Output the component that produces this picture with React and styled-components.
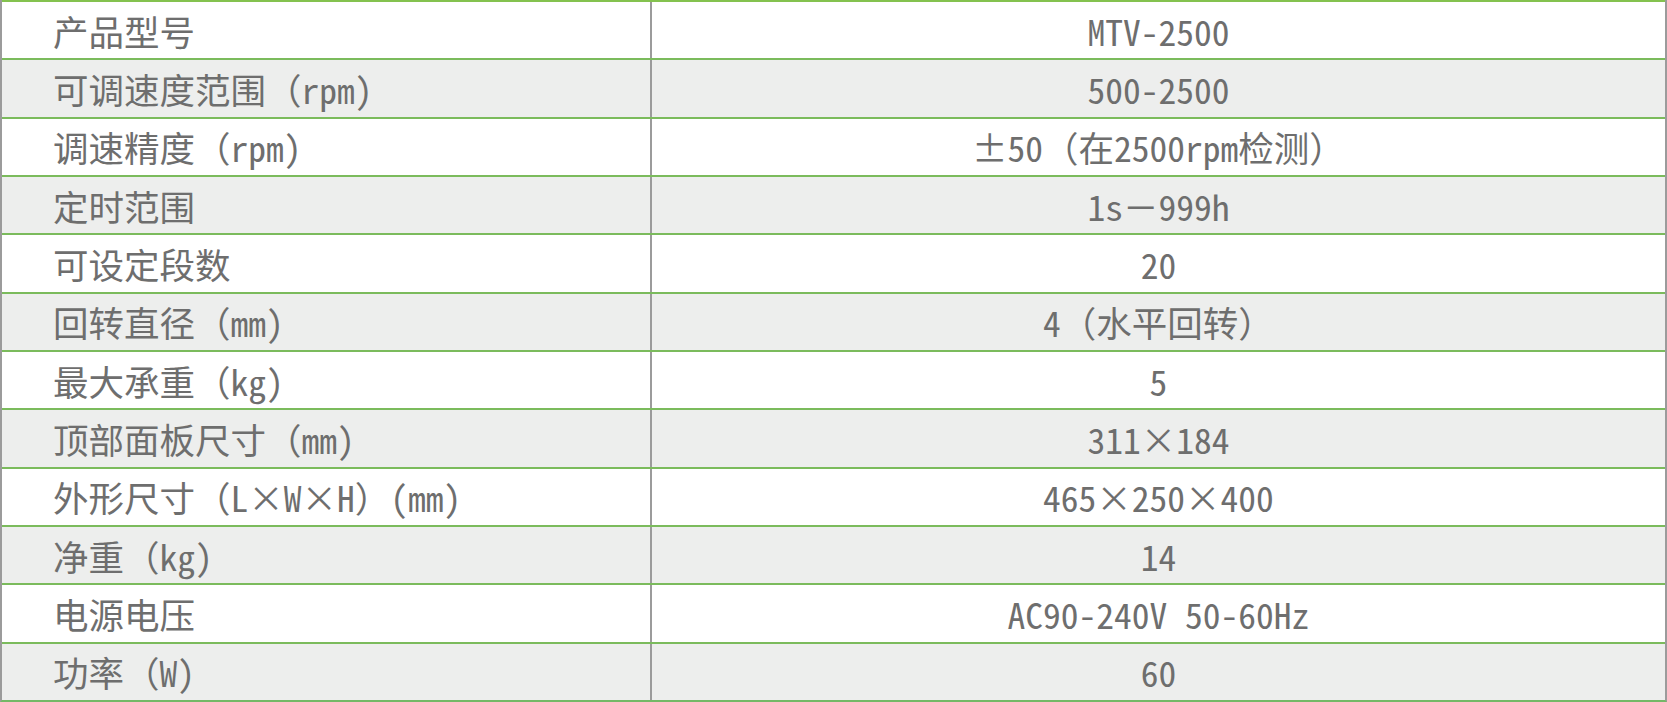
import styled, { createGlobalStyle } from 'styled-components'

const GlobalStyle = createGlobalStyle`
	html, body {
		margin: 0;
		padding: 0;
		background: #ffffff;
	}
`;

const rows = [
	["产品型号", "MTV-2500"],
	["可调速度范围（rpm)", "500-2500"],
	["调速精度（rpm)", "±50（在2500rpm检测）"],
	["定时范围", "1s－999h"],
	["可设定段数", "20"],
	["回转直径（mm)", "4（水平回转）"],
	["最大承重（kg)", "5"],
	["顶部面板尺寸（mm)", "311×184"],
	["外形尺寸（L×W×H）(mm)", "465×250×400"],
	["净重（kg)", "14"],
	["电源电压", "AC90-240V 50-60Hz"],
	["功率（W)", "60"],
];

const Table = styled.div`
	width: 1667px;
	height: 702px;
	box-sizing: border-box;
	display: grid;
	grid-template-rows: repeat(12, 1fr);
	border-left: 2px solid #9b9b9b;
	border-right: 2px solid #9b9b9b;
	border-bottom: 2px solid #74b866;
	font-family: "Noto Sans Mono CJK SC", "Noto Sans CJK SC", sans-serif;
	font-size: 35.5px;
	color: #6e6e6e;
`;

const Row = styled.div`
	display: grid;
	grid-template-columns: 648px 1fr;
	border-top: 2px solid ${p => (p.$index === 0 ? "#84c24f" : "#7bbb5c")};
	background: ${p => (p.$index % 2 === 1 ? "#edeeed" : "#ffffff")};
	min-height: 0;
`;

const Name = styled.div`
	display: flex;
	align-items: center;
	padding-left: 51px;
	white-space: nowrap;
`;

const Value = styled.div`
	display: flex;
	align-items: center;
	justify-content: center;
	border-left: 2px solid #9b9b9b;
	white-space: nowrap;
`;

export default function App() {
	return (
		<>
			<GlobalStyle />
			<Table>
				{rows.map(([name, value], i) => (
					<Row key={name} $index={i}>
						<Name>{name}</Name>
						<Value>{value}</Value>
					</Row>
				))}
			</Table>
		</>
	);
}
